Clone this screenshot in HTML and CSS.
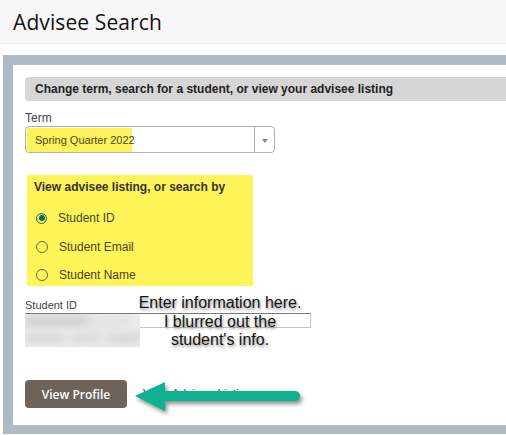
FILE: index.html
```html
<!DOCTYPE html>
<html>
<head>
<meta charset="utf-8">
<link rel="stylesheet" href="styles.css">
</head>
<body>
<header class="header"><h1 class="title">Advisee Search</h1></header>
<main class="frame">
  <div class="panel">
    <div class="bar">Change term, search for a student, or view your advisee listing</div>
    <div class="label term-label">Term</div>
    <div class="select">
      <div class="select-value"><span class="hl">Spring Quarter 2022</span></div>
      <div class="select-arrow"><span class="tri"></span></div>
    </div>
    <div class="options">
      <div class="opt-title">View advisee listing, or search by</div>
      <div class="opt"><span class="radio checked"></span><span>Student ID</span></div>
      <div class="opt"><span class="radio"></span><span>Student Email</span></div>
      <div class="opt"><span class="radio"></span><span>Student Name</span></div>
    </div>
    <div class="label id-label">Student ID</div>
    <div class="idfield">
      <div class="input"></div>
      <div class="blur">
        <span class="b b1"></span><span class="b b2"></span><span class="b b3"></span><span class="b b4"></span><span class="b b5"></span>
      </div>
      <div class="note">Enter information here.<br>I blurred out the<br>student's info.</div>
    </div>
    <div class="actions">
      <button class="btn">View Profile</button>
      <a class="link">View Advisee Listing</a>
      <svg class="arrow" width="180" height="44" viewBox="0 0 180 44">
        <path d="M3,19 L33,5 L33,14 L163,14 A5,5 0 0 1 163,24 L33,24 L33,34 Z" fill="#0fb28e"/>
      </svg>
    </div>
  </div>
</main>
</body>
</html>
```
FILE: styles.css
```css
html, body { margin: 0; padding: 0; background: #fff; }
body { font-family: "Liberation Sans", Arial, sans-serif; color: #333; width: 506px; height: 435px; overflow: hidden; }

.header { height: 43px; background: #f7f7f7; border-bottom: 1px solid #ebebeb; display: flex; align-items: center; }
.title { margin: 0 0 0 13px; font-family: "Open Sans", sans-serif; font-weight: 400; font-size: 21px; color: #111; letter-spacing: 0.1px; }

.frame { display: block; margin: 11px 0 0 3px; background: #adbac7; padding: 10px 0 9px 10px; }
.panel { background: #fff; padding: 12px 0 17px 12px; }

.bar { height: 24px; line-height: 24px; background: #d6d6d6; border-radius: 4px 0 0 4px; padding-left: 10px; font-weight: bold; font-size: 12px; color: #222; }

.label { font-size: 12px; color: #444; }
.term-label { margin-top: 9px; line-height: 16px; }

.select { width: 248px; height: 25px; border: 1px solid #b0b0b0; border-radius: 4px; display: flex; }
.select-value { flex: 1; display: flex; padding: 1px 0 0 1px; }
.hl { background: #fff35b; padding: 0 8px 0 8px; width: 89px; white-space: nowrap; font-size: 11px; color: #4a4620; line-height: 24px; }
.select-arrow { width: 19px; border-left: 1px solid #b0b0b0; display: flex; align-items: center; justify-content: center; }
.tri { width: 0; height: 0; border-left: 3.5px solid transparent; border-right: 3.5px solid transparent; border-top: 4px solid #888; margin-top: 2px; }

.options { margin: 22px 0 0 2px; width: 226px; height: 111px; background: #fff459; padding: 4px 0 0 0; box-sizing: border-box; }
.opt-title { font-weight: bold; font-size: 12px; color: #333; padding-left: 7px; line-height: 16px; }
.opt { display: flex; align-items: center; height: 28.5px; font-size: 12px; color: #4a4620; }
.opt-title + .opt { margin-top: 9px; }
.radio { width: 10px; height: 10px; border: 1px solid #6f6a3a; border-radius: 50%; margin: 0 11px 0 9px; box-sizing: content-box; background: transparent; position: relative; }
.radio.checked { border: 1.5px solid #0d6b57; width: 9px; height: 9px; }
.radio.checked::after { content: ""; position: absolute; left: 1.5px; top: 1.5px; width: 6px; height: 6px; border-radius: 50%; background: #0d6b57; }

.id-label { margin-top: 12px; font-size: 11px; line-height: 15px; }

.idfield { position: relative; height: 35px; }
.input { width: 284px; height: 13px; border: 1px solid #c4c4c4; border-top: 1px solid #7a7a7a; }
.blur { position: absolute; left: 0; top: 1px; width: 115px; height: 33px; background: #ececec; overflow: hidden; }
.b { position: absolute; background: #d4d4d4; filter: blur(4px); }
.b1 { left: 0; top: 2px; width: 64px; height: 10px; background: #cdcdcd; }
.b2 { left: 0; top: 20px; width: 40px; height: 9px; background: #d6d6d6; }
.b3 { left: 46px; top: 20px; width: 30px; height: 9px; background: #d9d9d9; }
.b4 { left: 82px; top: 20px; width: 34px; height: 9px; background: #d5d5d5; }
.b5 { left: 62px; top: 4px; width: 44px; height: 8px; background: #e0e0e0; }
.note { position: absolute; left: 95px; top: -19px; width: 200px; white-space: nowrap; text-align: center; font-size: 16px; line-height: 18.5px; color: #141414; text-shadow: 1px 2px 3px rgba(0,0,0,0.45); }

.actions { position: relative; display: flex; align-items: center; margin-top: 32px; }
.btn { width: 102px; height: 28px; border: 0; border-radius: 4px; background: #6d6358; color: #fff; font-family: "Open Sans", sans-serif; font-weight: 600; font-size: 12px; padding: 0; }
.link { margin-left: 16px; font-size: 12px; color: #444; text-decoration: underline; }
.arrow { position: absolute; left: 107px; top: -3px; filter: drop-shadow(2px 3px 2px rgba(0,0,0,0.45)); }
```
